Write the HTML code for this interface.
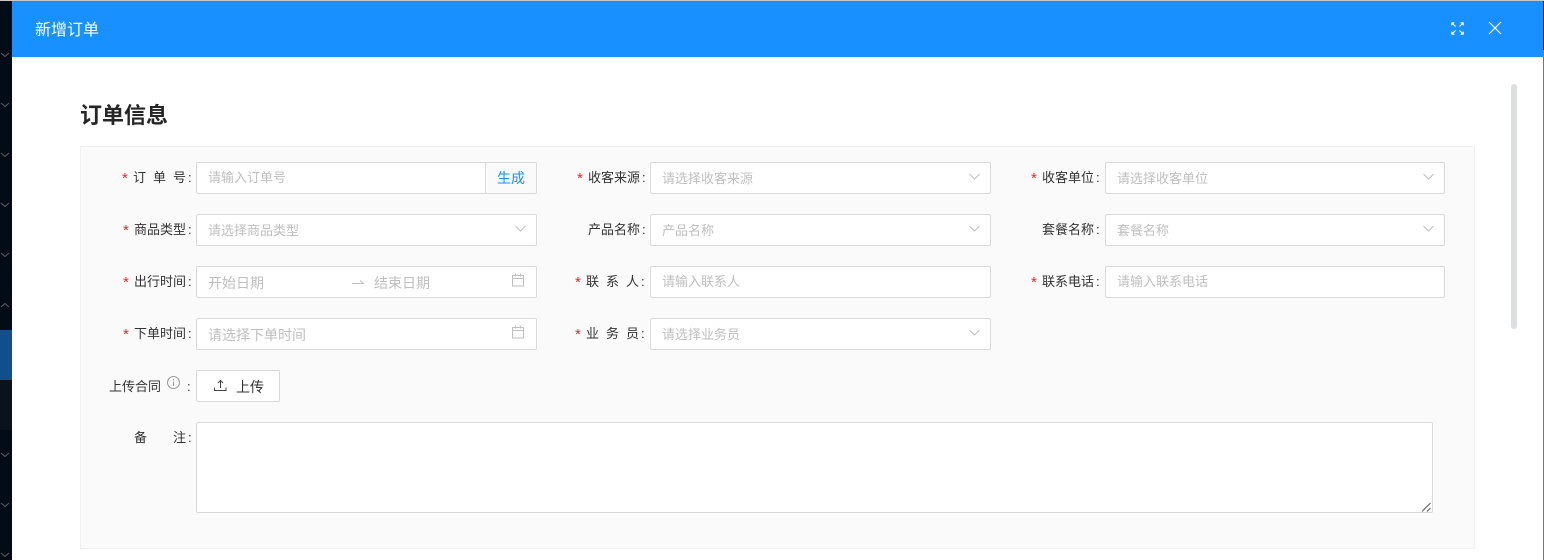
<!DOCTYPE html>
<html lang="zh"><head><meta charset="utf-8"><style>
html,body{margin:0;padding:0;width:1544px;height:560px;overflow:hidden;background:#fff}
body{position:relative;font-family:"Liberation Sans","Noto Sans CJK SC",sans-serif;font-size:14px;color:#333}
.a{position:absolute}
.box{position:absolute;box-sizing:border-box;background:#fff;border:1px solid #d9d9d9;border-radius:2px;height:32px}
.ph{position:absolute;color:#bfbfbf;font-size:13px;line-height:18px;white-space:nowrap}
.p14{font-size:14px}
.lb{position:absolute;font-size:13px;line-height:18px;white-space:nowrap;color:#333}
.lb i{font-style:normal;margin-left:2px}
.sp{letter-spacing:7px}
.st{position:absolute;color:#f5222d;font-size:15px;line-height:18px;font-family:"Liberation Sans",sans-serif}
svg{position:absolute;overflow:visible}
</style></head><body>
<div class="a" style="left:0;top:0;width:12px;height:560px;background:#020c16"></div>
<div class="a" style="left:0;top:330px;width:12px;height:50px;background:#0f4f8d"></div>
<div class="a" style="left:0;top:380px;width:12px;height:50px;background:#0a121c"></div>
<svg style="left:0;top:0" width="12" height="560" fill="none" stroke="#5a6068" stroke-width="1">
<path d="M1 53l4 3.500 4-3.500M1 103l4 3.500 4-3.500M1 153l4 3.500 4-3.500M1 203l4 3.500 4-3.500M1 253l4 3.500 4-3.500M1 307l4-3.500 4 3.500M1 453l4 3.500 4-3.500M1 503l4 3.500 4-3.500M1 553l4 3.500 4-3.500"/></svg>
<div class="a" style="left:0;top:0;width:1544px;height:1px;background:#c8c8c8"></div>
<div class="a" style="left:12px;top:1px;width:1531px;height:56px;background:#1890ff"></div>
<div class="a" style="left:1543px;top:1px;width:1px;height:49px;background:#02101e"></div>
<div class="a" style="left:1543px;top:50px;width:1px;height:510px;background:#777"></div>
<div class="a" style="left:35px;top:20px;color:#fff;font-size:16px;line-height:22px;white-space:nowrap">新增订单</div>
<svg style="left:1450.500px;top:21.500px" width="13" height="13" fill="none" stroke="#fff" stroke-width="1.200"><path d="M1 1l3.500 3.500M12 1L8.500 4.500M1 12l3.500-3.500M12 12L8.500 8.500"/><path d="M0.500 0.500h3l-3 3zM12.500 0.500h-3l3 3zM0.500 12.500h3l-3-3zM12.500 12.500h-3l3-3z" fill="#fff" stroke-width="0.500"/></svg>
<svg style="left:1488px;top:21px" width="14" height="14" fill="none" stroke="#fff" stroke-width="1.200"><path d="M1 1l12 12M13 1L1 13"/></svg>
<div class="a" style="left:1511px;top:84px;width:6px;height:245px;border-radius:3px;background:#dddee0"></div>
<div class="a" style="left:80px;top:102px;font-size:22px;line-height:28px;font-weight:700;color:#262626;white-space:nowrap">订单信息</div>
<div class="a" style="left:80px;top:146px;width:1395px;height:403px;box-sizing:border-box;background:#fafafa;border:1px solid #f0f0f0"></div>

<div class="st" style="left:122px;top:170px">*</div><div class="lb" style="left:133px;top:169px"><span class="sp">订单</span>号<i>:</i></div>
<div class="box" style="left:196px;top:162px;width:341px"></div>
<div class="a" style="left:485px;top:163px;width:51px;height:30px;box-sizing:border-box;border-left:1px solid #d9d9d9;background:#fafafa;color:#1890ff;font-size:14px;text-align:center;line-height:30px;border-radius:0 2px 2px 0">生成</div>
<div class="ph" style="left:208px;top:169px">请输入订单号</div>

<div class="st" style="left:577px;top:170px">*</div><div class="lb" style="left:588px;top:169px">收客来源<i>:</i></div>
<div class="box" style="left:650px;top:162px;width:341px"></div><div class="ph" style="left:662px;top:170px">请选择收客来源</div>
<div class="st" style="left:1031px;top:170px">*</div><div class="lb" style="left:1042px;top:169px">收客单位<i>:</i></div>
<div class="box" style="left:1105px;top:162px;width:340px"></div><div class="ph" style="left:1117px;top:170px">请选择收客单位</div>

<div class="st" style="left:123px;top:222px">*</div><div class="lb" style="left:134px;top:221px">商品类型<i>:</i></div>
<div class="box" style="left:196px;top:214px;width:341px"></div><div class="ph" style="left:208px;top:222px">请选择商品类型</div>
<div class="lb" style="left:588px;top:221px">产品名称<i>:</i></div>
<div class="box" style="left:650px;top:214px;width:341px"></div><div class="ph" style="left:662px;top:222px">产品名称</div>
<div class="lb" style="left:1042px;top:221px">套餐名称<i>:</i></div>
<div class="box" style="left:1105px;top:214px;width:340px"></div><div class="ph" style="left:1117px;top:222px">套餐名称</div>

<div class="st" style="left:123px;top:274px">*</div><div class="lb" style="left:134px;top:273px">出行时间<i>:</i></div>
<div class="box" style="left:196px;top:266px;width:341px"></div><div class="ph p14" style="left:208px;top:274px">开始日期</div><div class="ph p14" style="left:374px;top:274px">结束日期</div>
<svg style="left:352px;top:278px" width="12" height="8" fill="none" stroke="#bfbfbf"><path d="M0 5.500h11.500L8 2.500"/></svg>
<div class="st" style="left:575px;top:274px">*</div><div class="lb" style="left:586px;top:273px"><span class="sp">联系</span>人<i>:</i></div>
<div class="box" style="left:650px;top:266px;width:341px"></div><div class="ph" style="left:662px;top:273px">请输入联系人</div>
<div class="st" style="left:1031px;top:274px">*</div><div class="lb" style="left:1042px;top:273px">联系电话<i>:</i></div>
<div class="box" style="left:1105px;top:266px;width:340px"></div><div class="ph" style="left:1117px;top:273px">请输入联系电话</div>

<div class="st" style="left:123px;top:326px">*</div><div class="lb" style="left:134px;top:325px">下单时间<i>:</i></div>
<div class="box" style="left:196px;top:318px;width:341px"></div><div class="ph p14" style="left:208px;top:326px">请选择下单时间</div>
<div class="st" style="left:575px;top:326px">*</div><div class="lb" style="left:586px;top:325px"><span class="sp">业务</span>员<i>:</i></div>
<div class="box" style="left:650px;top:318px;width:341px"></div><div class="ph" style="left:662px;top:326px">请选择业务员</div>

<svg style="left:0;top:0" width="1544" height="560" fill="none" stroke="#bfbfbf" stroke-width="1">
<path d="M969.500 174l5 5 5-5M1423.500 174l5 5 5-5M515.500 226l5 5 5-5M969.500 226l5 5 5-5M1423.500 226l5 5 5-5M969.500 330l5 5 5-5"/>
<path d="M512.500 275.500h11v10.500h-11zM512.500 278.500h11M515.500 273.500v3M520.500 273.500v3M512.500 327.500h11v10.500h-11zM512.500 330.500h11M515.500 325.500v3M520.500 325.500v3"/>
</svg>

<div class="lb" style="left:109px;top:378px">上传合同</div>
<svg style="left:167px;top:376px" width="14" height="14" fill="none" stroke="#999"><circle cx="6.500" cy="6.500" r="6"/><path d="M6.500 5.500v4.500M6.500 3v1.500"/></svg>
<div class="lb" style="left:187px;top:378px">:</div>
<div class="box" style="left:196px;top:370px;width:84px"></div>
<svg style="left:214px;top:379px" width="13" height="13" fill="none" stroke="#444"><path d="M6.500 9V1.500M4 4l2.500-2.500L9 4M0.500 8.500v3h11.500v-3"/></svg>
<div class="lb" style="left:236px;top:378px;font-size:14px">上传</div>

<div class="lb" style="left:134px;top:429px">备</div><div class="lb" style="left:173px;top:429px">注<i>:</i></div>
<div class="box" style="left:196px;top:422px;width:1237px;height:91px"></div>
<svg style="left:1421px;top:502px" width="10" height="10" fill="none" stroke="#666" stroke-width="1.200"><path d="M1 9.500L9.500 1M6 9.500L9.500 6"/></svg>
</body></html>
